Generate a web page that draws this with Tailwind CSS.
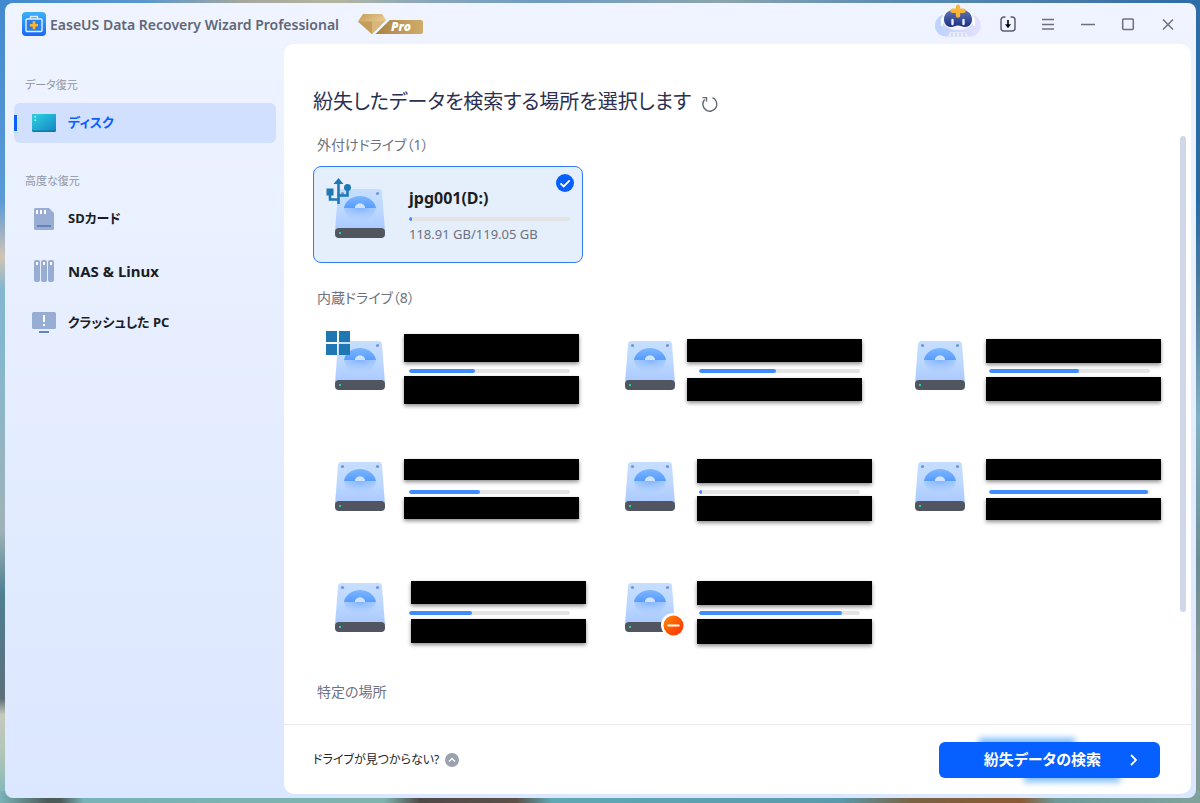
<!DOCTYPE html>
<html lang="ja">
  <head>
    <meta charset="UTF-8" />
    <meta name="viewport" content="width=device-width, initial-scale=1.0" />
    <title>EaseUS Data Recovery Wizard Professional</title>
    <script src="https://cdn.jsdelivr.net/npm/@tailwindcss/browser@4"></script>
    <style>
      body {
        font-family: "Noto Sans", "Noto Sans CJK JP", sans-serif;
        font-feature-settings: "palt";
      }
      /* Desktop wallpaper that shows around the window */
      .wallpaper {
        background:
          linear-gradient(to right, #4389cf 0%, #5b97cf 12%, #a3a79f 20%, #b5b69f 28%, #8fa9b8 34%, #6f9cc2 45%, #8ca4ac 60%, #5a8bb5 75%, #4a7aa8 88%, #2c6ca8 100%) top / 100% 8px no-repeat,
          linear-gradient(to right, #79b3b8 0%, #4c5a58 4%, #4c5a58 5%, #79b3b8 7%, #7fb3ae 32%, #4f4a48 35%, #5c5048 43%, #5fa9b4 46%, #5a9aac 70%, #7a6242 76%, #8a5a34 85%, #6f9a98 88%, #7fa39c 100%) bottom / 100% 12px no-repeat,
          linear-gradient(to bottom, #2c6ca8 0%, #2a6ba6 25%, #55809f 38%, #7fb0c4 52%, #6d8d94 70%, #8a9896 85%, #7f9a94 100%) right / 50% 100% no-repeat,
          linear-gradient(to bottom, #4389cf 0%, #5a9ad8 25%, #d0c4b4 32%, #83b7cf 36%, #83b7cf 42%, #9fb3b8 66%, #4f7f92 74%, #5d6f78 87%, #c4c9bd 89%, #b0c4b8 94%, #79b3b8 100%) left / 50% 100% no-repeat;
      }
    </style>
  </head>
  <body class="wallpaper h-screen overflow-hidden pt-[3px] pr-1 pb-[5px] pl-[5px]">
    <!-- Shared drive artwork -->
    <svg class="absolute size-0" aria-hidden="true">
      <defs>
        <linearGradient id="caseFill" x1="0" y1="0" x2="0" y2="1">
          <stop offset="0" stop-color="#c6deff" />
          <stop offset="0.5" stop-color="#bcd8ff" />
          <stop offset="1" stop-color="#a9c8ff" />
        </linearGradient>
        <linearGradient id="platterFill" x1="0" y1="0" x2="0" y2="1">
          <stop offset="0" stop-color="#7db6ff" />
          <stop offset="1" stop-color="#569cff" />
        </linearGradient>
        <radialGradient id="glowFill" cx="0.5" cy="0" r="1">
          <stop offset="0" stop-color="#7fb3ff" />
          <stop offset="1" stop-color="#a9caff" stop-opacity="0" />
        </radialGradient>
        <symbol id="drive" viewBox="0 0 50 50">
          <path d="M6.500 1h37a3.500 3.500 0 0 1 3.500 3.200L50 43H0L3 4.200A3.500 3.500 0 0 1 6.500 1z" fill="url(#caseFill)" />
          <path d="M9 20h32c-1 8-8 13-16 13S10 28 9 20z" fill="url(#glowFill)" />
          <path d="M9 20C10 13 17 8 25 8s15 5 16 12H30a5 4.500 0 0 0-10 0z" fill="url(#platterFill)" />
          <path d="M20 20a5 4.500 0 0 1 10 0z" fill="#cfe3ff" />
          <circle cx="7.500" cy="5.500" r="1.600" fill="#7396cc" />
          <circle cx="42.500" cy="5.500" r="1.600" fill="#7396cc" />
          <rect y="40" width="50" height="10" rx="4" fill="#51555f" />
          <rect x="4" y="44" width="2" height="2" fill="#20d49a" />
        </symbol>
      </defs>
    </svg>

    <div class="flex h-full flex-col overflow-hidden rounded-lg bg-linear-to-b from-[#eff4ff] to-[#dbe7ff]">
      <!-- Title bar -->
      <header class="flex h-[41px] shrink-0 items-center pr-2 pl-[17px]">
        <svg class="size-6" viewBox="0 0 24 24" aria-hidden="true">
          <defs>
            <linearGradient id="appFill" x1="0" y1="0" x2="0" y2="1">
              <stop offset="0" stop-color="#3bb0fb" />
              <stop offset="1" stop-color="#1a66fa" />
            </linearGradient>
          </defs>
          <rect width="24" height="24" rx="4" fill="url(#appFill)" />
          <path d="M8.500 7V4.500h7V7" fill="none" stroke="#d5eaff" stroke-width="1.400" />
          <rect x="4" y="7" width="16" height="12.500" rx="1" fill="#2b7fe8" stroke="#e3f1ff" stroke-width="1.400" />
          <path d="M12 9.200v8M8 13.200h8" stroke="#ffb62b" stroke-width="2.600" />
        </svg>
        <h1 class="ml-1 pt-0.5 text-sm font-semibold text-[#5f6779]">EaseUS Data Recovery Wizard Professional</h1>
        <svg class="ml-[19px] h-6 w-[66px]" viewBox="0 0 66 24" role="img" aria-label="Pro">
          <defs>
            <linearGradient id="goldFill" x1="0" y1="0" x2="1" y2="0">
              <stop offset="0" stop-color="#a9823f" />
              <stop offset="1" stop-color="#d0ac6c" />
            </linearGradient>
            <linearGradient id="gemFill" x1="0" y1="0" x2="1" y2="1">
              <stop offset="0" stop-color="#c79c55" />
              <stop offset="0.600" stop-color="#e6c78d" />
              <stop offset="1" stop-color="#b98c45" />
            </linearGradient>
          </defs>
          <path d="M31 8h32a2 2 0 0 1 2 2v10a2 2 0 0 1-2 2H17z" fill="url(#goldFill)" />
          <path d="M5 2h19l4 6-14 14L0 9.500z" fill="url(#gemFill)" />
          <path d="M0 9.500 27 9 14 22z" fill="#d9b679" />
          <path d="M0 9.500h14L14 22z" fill="#c49c5b" />
          <path d="M31 7.500 15.500 22.500" stroke="#f3f5fb" stroke-width="1.800" />
          <text x="33" y="19" fill="#fff" font-family="Open Sans" font-size="12" font-weight="800" font-style="italic">Pro</text>
        </svg>

        <div class="ml-auto flex h-full items-center">
          <button class="mr-[7px] self-start" aria-label="AI アシスタント">
            <svg class="h-[34px] w-[46px]" viewBox="0 0 46 34" aria-hidden="true">
              <defs>
                <linearGradient id="pillFill" x1="0" y1="0" x2="1" y2="0">
                  <stop offset="0" stop-color="#bcd2ff" />
                  <stop offset="1" stop-color="#e6e0ff" />
                </linearGradient>
                <linearGradient id="faceFill" x1="0" y1="0" x2="0" y2="1">
                  <stop offset="0" stop-color="#6379b5" />
                  <stop offset="1" stop-color="#1d2f84" />
                </linearGradient>
              </defs>
              <rect y="11.500" width="46" height="22" rx="11" fill="url(#pillFill)" />
              <ellipse cx="23" cy="16" rx="16" ry="11" fill="#f4f6ff" />
              <path d="M7 16v6M39 16v6" stroke="#fff" stroke-width="2" stroke-linecap="round" />
              <path d="M15 29h16l2 4.500H13z" fill="#e8ecfb" />
              <path d="M17 29.500v4M21 29.500v4M25 29.500v4M29 29.500v4" stroke="#c4cbe2" />
              <path d="M23 6c8 0 14 3.500 14 10.500 0 4.500-3 7.500-7 7.500-3 0-4-1.500-7-1.500s-4 1.500-7 1.500c-4 0-7-3-7-7.500C9 9.500 15 6 23 6z" fill="url(#faceFill)" />
              <path d="M17.500 17v4M28.500 17v4" stroke="#eaf3ff" stroke-width="2.400" stroke-linecap="round" />
              <path d="M20.800 4c0-3.500 4.400-3.500 4.400 0v1.500h3.300a2.200 2.200 0 0 1 0 4.400h-3.300v2.600a2.200 2.200 0 0 1-4.400 0V9.900h-3.300a2.200 2.200 0 0 1 0-4.400h3.300z" fill="#f9b43c" />
            </svg>
          </button>
          <button class="flex h-8 w-10 items-center justify-center" aria-label="インポート">
            <svg class="size-4" viewBox="0 0 16 16" fill="none" aria-hidden="true">
              <path d="M5.500 1H4a3 3 0 0 0-3 3v8a3 3 0 0 0 3 3h8a3 3 0 0 0 3-3V4a3 3 0 0 0-3-3h-1.500" stroke="#5a6070" stroke-width="1.500" />
              <path d="M8 4v5" stroke="#000" stroke-width="1.600" />
              <path d="M5 8.200h6L8 12.200z" fill="#000" />
            </svg>
          </button>
          <button class="flex h-8 w-10 items-center justify-center" aria-label="メニュー">
            <svg class="size-4" viewBox="0 0 16 16" aria-hidden="true">
              <path d="M2 3.500h12M2 8.500h12M2 13h12" stroke="#6a7080" stroke-width="1.500" />
            </svg>
          </button>
          <button class="flex h-8 w-10 items-center justify-center" aria-label="最小化">
            <svg class="size-4" viewBox="0 0 16 16" aria-hidden="true">
              <path d="M1 8.500h14" stroke="#6a7080" stroke-width="1.400" />
            </svg>
          </button>
          <button class="flex h-8 w-10 items-center justify-center" aria-label="最大化">
            <svg class="size-4" viewBox="0 0 16 16" aria-hidden="true">
              <rect x="2.700" y="3" width="10.600" height="10.600" rx="1" fill="none" stroke="#6a7080" stroke-width="1.500" />
            </svg>
          </button>
          <button class="flex h-8 w-10 items-center justify-center" aria-label="閉じる">
            <svg class="size-4" viewBox="0 0 16 16" aria-hidden="true">
              <path d="m3 3.500 10 10m0-10-10 10" stroke="#6a7080" stroke-width="1.500" />
            </svg>
          </button>
        </div>
      </header>

      <div class="flex min-h-0 flex-1 pr-[5px] pb-1">
        <!-- Sidebar -->
        <nav class="w-[279px] shrink-0 pt-[31px] pr-2 pl-[9px]">
          <h2 class="mb-2 pl-[11px] text-[11px] leading-5 text-[#8f95a3]">データ復元</h2>
          <a href="#disk" class="relative flex h-10 items-center gap-3 rounded-md bg-[#d1e0ff] pl-[18px] text-[13px] font-bold text-[#0a5fff]">
            <span class="absolute left-0 h-4 w-[3px] bg-[#0a5fff]"></span>
            <svg class="h-[18px] w-6" viewBox="0 0 24 18" aria-hidden="true">
              <defs>
                <linearGradient id="diskFill" x1="0" y1="0" x2="1" y2="1">
                  <stop offset="0" stop-color="#2fd3de" />
                  <stop offset="1" stop-color="#1486c8" />
                </linearGradient>
              </defs>
              <rect width="24" height="18" rx="1.500" fill="#14789c" />
              <rect width="24" height="16.500" rx="1.500" fill="url(#diskFill)" />
              <path d="M2.500 2h1.600v1.600H2.500zM2.500 5.500h1.600v1.600H2.500z" fill="#a8f5f5" />
            </svg>
            ディスク
          </a>

          <h2 class="mt-7 mb-2 pl-[11px] text-[11px] leading-5 text-[#8f95a3]">高度な復元</h2>
          <div class="flex flex-col gap-3 text-[13px] font-bold text-[#1a1d24]">
            <a href="#sd" class="flex h-10 items-center gap-3 rounded-md pl-[18px]">
              <svg class="size-6" viewBox="0 0 24 24" aria-hidden="true">
                <path d="M4 1h13l5 5v15.500a1.500 1.500 0 0 1-1.500 1.500h-17A1.500 1.500 0 0 1 2 21.500v-19A1.500 1.500 0 0 1 3.500 1z" fill="#98add4" />
                <path d="M4 3h2v4H4zM8 3h2v4H8zM12 3h2v4h-2z" fill="#fff" />
                <path d="M5 19h14" stroke="#6483be" stroke-width="2" />
              </svg>
              SDカード
            </a>
            <a href="#nas" class="flex h-10 items-center gap-3 rounded-md pl-[18px] text-[15px]">
              <svg class="size-6" viewBox="0 0 24 24" aria-hidden="true">
                <g fill="#98add4">
                  <rect x="2" y="1" width="6" height="22" rx="2" />
                  <rect x="9" y="1" width="6" height="22" rx="2" />
                  <rect x="16" y="1" width="6" height="22" rx="2" />
                </g>
                <path d="M4 3h2v3H4zM11 3h2v3h-2zM18 3h2v3h-2z" fill="#fff" />
              </svg>
              NAS &amp; Linux
            </a>
            <a href="#crash" class="flex h-10 items-center gap-3 rounded-md pl-[18px]">
              <svg class="size-6" viewBox="0 0 24 24" aria-hidden="true">
                <rect y="1" width="24" height="17" rx="1.500" fill="#98add4" />
                <path d="M12 4v7M12 13v2" stroke="#fff" stroke-width="2" />
                <path d="M7 21h10" stroke="#6483be" stroke-width="2" />
              </svg>
              クラッシュした PC
            </a>
          </div>
        </nav>

        <main class="relative flex min-w-0 flex-1 flex-col rounded-[10px] bg-white">
          <!-- Drive selection -->
          <section class="min-h-0 flex-1 overflow-hidden pt-[42px] pl-[29px]">
            <div class="flex h-8 items-center gap-[10px]">
              <h2 class="text-xl text-[#2b3050]">紛失したデータを検索する場所を選択します</h2>
              <button aria-label="更新" class="pt-1">
                <svg class="size-[18px]" viewBox="0 0 18 18" fill="none" stroke="#5f6779" stroke-width="1.400" aria-hidden="true">
                  <path d="M11.500 2.700A7 7 0 1 1 3.600 4.500" />
                  <path d="M1.500 2.600h4v4" />
                </svg>
              </button>
            </div>

            <h3 class="mt-[17px] pl-1 text-sm leading-5 text-[#6b7280]">外付けドライブ（1）</h3>
            <div id="external" class="mt-[11px] grid grid-cols-[repeat(auto-fill,270px)] gap-x-5"></div>

            <h3 class="mt-[25px] pl-1 text-sm leading-5 text-[#6b7280]">内蔵ドライブ（8）</h3>
            <div id="internal" class="mt-[10px] grid grid-cols-[repeat(auto-fill,270px)] gap-x-5 gap-y-6"></div>

            <h3 class="mt-[25px] pl-1 text-sm leading-5 text-[#6b7280]">特定の場所</h3>
          </section>
          <div class="absolute top-[92px] right-[5px] h-[476px] w-1.5 rounded-full bg-[#d0d7e9]"></div>

          <!-- Footer -->
          <footer class="flex h-[70px] shrink-0 items-center justify-between border-t border-[#ececee] pr-[31px] pl-[29px]">
            <button class="flex items-center gap-1.5 text-xs text-[#22252c]">
              ドライブが見つからない?
              <svg class="size-3.5" viewBox="0 0 14 14" aria-hidden="true">
                <circle cx="7" cy="7" r="7" fill="#9ba1af" />
                <path d="m4 8.500 3-3 3 3" fill="none" stroke="#fff" stroke-width="1.400" />
              </svg>
            </button>
            <div class="relative">
              <span class="absolute -top-1 left-10 h-5 w-24 bg-[#7fbcff] blur-[3px]"></span>
              <span class="absolute right-10 -bottom-1 h-5 w-24 bg-[#7fbcff] blur-[3px]"></span>
              <button class="relative flex h-9 w-[221px] items-center justify-end gap-7 rounded-md bg-[#0560ff] pr-[21px] text-[15px] font-bold text-white">
                紛失データの検索
                <svg class="h-3.5 w-2.5" viewBox="0 0 10 14" fill="none" stroke="#fff" stroke-width="1.800" aria-hidden="true">
                  <path d="m2 2 5 5-5 5" />
                </svg>
              </button>
            </div>
          </footer>
        </main>
      </div>
    </div>

    <script>
      // covers: [left, top, height] of each blacked-out label inside the card
      const externalDrives = [
        { name: "jpg001(D:)", size: "118.91 GB/119.05 GB", used: 2, badge: "usb", selected: true, covers: [] },
      ];
      const internalDrives = [
        { used: 41, badge: "windows", covers: [[91, 16, 28], [91, 58, 28]] },
        { used: 48, covers: [[84, 21, 23], [84, 60, 23]] },
        { used: 56, covers: [[93, 21, 24], [93, 59, 24]] },
        { used: 44, covers: [[91, 20, 21], [91, 58, 22]] },
        { used: 2, covers: [[94, 20, 24], [94, 57, 25]] },
        { used: 99, covers: [[93, 20, 21], [93, 59, 22]] },
        { used: 39, covers: [[98, 21, 23], [98, 59, 24]] },
        { used: 89, badge: "blocked", covers: [[94, 21, 24], [94, 59, 25]] },
      ];

      const badges = {
        usb: `<svg class="absolute -top-[10px] -left-[9px] h-[27px] w-[26px]" viewBox="0 0 26 27" aria-hidden="true">
            <path d="M12.500 4v22M4 14v7.500h9M21.500 12v5.500h-9" fill="none" stroke="#1f78b4" stroke-width="2.600" />
            <path d="M12.500 0 17.500 6h-10zM.500 10.500h7v7h-7z" fill="#1f78b4" />
            <circle cx="21.500" cy="9.500" r="3.500" fill="#1f78b4" />
          </svg>`,
        windows: `<svg class="absolute -top-[9px] -left-[9px] size-6" viewBox="0 0 24 24" aria-hidden="true">
            <path d="M0 0h11v11H0zM13 0h11v11H13zM0 13h11v11H0zM13 13h11v11H13z" fill="#1f78b4" />
          </svg>`,
        blocked: `<svg class="absolute -right-[10px] -bottom-[5px] size-6" viewBox="0 0 24 24" aria-hidden="true">
            <defs><linearGradient id="stopFill" x1="0" y1="0" x2="1" y2="1"><stop offset="0" stop-color="#ff8a00" /><stop offset="1" stop-color="#ff2a00" /></linearGradient></defs>
            <circle cx="12" cy="12" r="12" fill="#fff" />
            <circle cx="12.500" cy="12.500" r="10" fill="url(#stopFill)" />
            <path d="M6.500 12.500h12" stroke="#fff" stroke-width="2" />
          </svg>`,
      };

      const check = `<svg class="absolute top-[7px] right-2 size-[18px]" viewBox="0 0 18 18" aria-hidden="true">
          <circle cx="9" cy="9" r="9" fill="#0560ff" />
          <path d="m4.500 9.300 3.200 3.200 6-6.200" fill="none" stroke="#fff" stroke-width="1.800" />
        </svg>`;

      function driveCard(drive) {
        const frame = drive.selected ? "border-[#2f7bff] bg-[#e5eefb]" : "border-transparent";
        const covers = drive.covers
          .map(([left, top, height]) => `<span class="absolute w-[175px] bg-black shadow-[0_2px_4px_rgba(0,0,0,0.45)]" style="left:${left - 1}px;top:${top - 1}px;height:${height}px"></span>`)
          .join("");
        return `<button class="relative flex h-[97px] gap-6 rounded-lg border pt-[21px] pr-3 pl-[21px] text-left ${frame}">
            <span class="relative size-[50px] shrink-0">
              <svg class="size-full"><use href="#drive" /></svg>
              ${badges[drive.badge] || ""}
            </span>
            <span class="flex flex-1 flex-col">
              <span class="h-5 text-base leading-5 font-bold text-[#1a1d24]">${drive.name || ""}</span>
              <span class="mt-[9px] h-1 overflow-hidden rounded-full bg-[#e4e4e4]">
                <span class="block h-full rounded-full bg-[#3f8cff]" style="width:${drive.used}%"></span>
              </span>
              <span class="mt-[3px] text-[13px] leading-5 text-[#6b7280]">${drive.size || ""}</span>
            </span>
            ${covers}
            ${drive.selected ? check : ""}
          </button>`;
      }

      document.getElementById("external").innerHTML = externalDrives.map(driveCard).join("");
      document.getElementById("internal").innerHTML = internalDrives.map(driveCard).join("");
    </script>
  </body>
</html>
